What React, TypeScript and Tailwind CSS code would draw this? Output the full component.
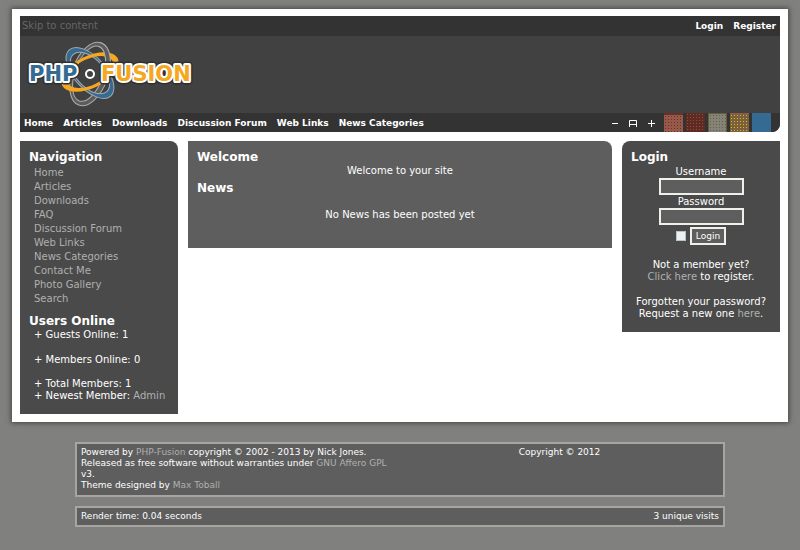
import type {ReactNode} from 'react'

const mainLinks = ['Home', 'Articles', 'Downloads', 'Discussion Forum', 'Web Links', 'News Categories']

const navigation = [
  'Home',
  'Articles',
  'Downloads',
  'FAQ',
  'Discussion Forum',
  'Web Links',
  'News Categories',
  'Contact Me',
  'Photo Gallery',
  'Search',
]

const swatches = [
  {
    name: 'Clay',
    style:
      'border-t-2 border-[#6a3026] bg-[#96594a] bg-[radial-gradient(#6a3026_30%,transparent_32%)] bg-[size:3px_3px]',
  },
  {
    name: 'Brick',
    style: 'bg-[#5e2a22] bg-[radial-gradient(#8c5144_30%,transparent_32%)] bg-[size:3px_3px]',
  },
  {
    name: 'Stone',
    style:
      'border border-b-0 border-[#625f31] bg-[#858379] bg-[radial-gradient(#65623a_30%,transparent_32%)] bg-[size:3px_3px]',
  },
  {
    name: 'Amber',
    style:
      'border-t border-[#96594a] bg-[#77613f] bg-[radial-gradient(#f9ad12_45%,transparent_47%)] bg-[size:3px_3px]',
  },
  {name: 'Blue', style: 'bg-[#356b92]'},
]

function GreyRing() {
  return (
    <path
      transform="translate(90 74) rotate(20)"
      fill="#5c5c5c"
      stroke="#adadad"
      strokeWidth="1"
      d="M-18 0A18 33 0 1 1 18 0A18 33 0 1 1 -18 0ZM-15 0A14 29 0 1 0 13 0A14 29 0 1 0 -15 0Z"
    />
  )
}

function Logo() {
  return (
    <svg width="170" height="70" viewBox="26 40 170 70" role="img" aria-label="PHP-Fusion">
      <clipPath id="ring-front">
        <rect x="99" y="40" width="14" height="34" />
      </clipPath>
      <g fillRule="evenodd">
        <GreyRing />
        <path
          transform="translate(90 73) rotate(-42)"
          fill="#356b92"
          stroke="#a3a9ac"
          strokeWidth="1"
          d="M-16 0A16 31 0 1 1 16 0A16 31 0 1 1 -16 0ZM-14 0A14 25 0 1 0 14 0A14 25 0 1 0 -14 0Z"
        />
        <path
          transform="translate(90 72) rotate(64)"
          fill="#f5a81f"
          d="M-16 0A16 31 0 1 1 16 0A16 31 0 1 1 -16 0ZM-13 0A13 25 0 1 0 13 0A13 25 0 1 0 -13 0Z"
        />
        <g clipPath="url(#ring-front)">
          <GreyRing />
        </g>
      </g>
      <g
        fontFamily="'DejaVu Sans', sans-serif"
        fontSize="21"
        fontWeight="700"
        strokeLinejoin="round"
        paintOrder="stroke"
      >
        <g fill="#303031" stroke="#303031" strokeWidth="7">
          <text x="29" y="81">PHP</text>
          <text x="101" y="81">FUSION</text>
        </g>
        <g stroke="#ffffff" strokeWidth="4">
          <text x="29" y="81" fill="#356b92">PHP</text>
          <text x="101" y="81" fill="#f5a81f">FUSION</text>
        </g>
      </g>
      <circle cx="90" cy="74" r="6" fill="#414142" />
      <circle cx="90" cy="74" r="4" fill="#414142" stroke="#ffffff" strokeWidth="2" />
    </svg>
  )
}

function Header() {
  return (
    <header className="overflow-hidden rounded-br-lg bg-[#414142] text-[9px] font-bold">
      <div className="flex h-5 items-center justify-between bg-[#333333] pr-1 pl-[2px]">
        <a href="#content" className="text-[10px] font-normal text-[#666666]">
          Skip to content
        </a>
        <div className="flex gap-[10px]">
          <a href="#login">Login</a>
          <a href="#register">Register</a>
        </div>
      </div>
      <div className="px-[6px] pt-1 pb-[3px]">
        <a href="#home" className="inline-block align-top">
          <Logo />
        </a>
      </div>
      <div className="flex h-[19px] items-center justify-between bg-[#333333] pr-[9px] pl-1">
        <nav className="flex gap-[10px]">
          {mainLinks.map((link) => (
            <a key={link} href="#content">
              {link}
            </a>
          ))}
        </nav>
        <div className="flex items-center">
          <div className="mr-2 flex items-center gap-[9px]">
            <button type="button" aria-label="Smaller text">
              <svg width="8" height="10" className="block">
                <path d="M1 5.5H7" stroke="#fff" />
              </svg>
            </button>
            <button type="button" aria-label="Default text">
              <svg width="10" height="10" className="block">
                <path d="M1.5 9V2.5H8.5V9M1.5 6.5H8.5" stroke="#fff" fill="none" />
              </svg>
            </button>
            <button type="button" aria-label="Larger text">
              <svg width="9" height="10" className="block">
                <path d="M1 5.5H8M4.5 2V9" stroke="#fff" />
              </svg>
            </button>
          </div>
          <div className="flex gap-[3px]">
            {swatches.map((swatch) => (
              <button
                key={swatch.name}
                type="button"
                aria-label={swatch.name}
                className={`h-[19px] w-[19px] ${swatch.style}`}
              />
            ))}
          </div>
        </div>
      </div>
    </header>
  )
}

function Title({children}: {children: ReactNode}) {
  return <h2 className="text-[12px] leading-4 font-bold">{children}</h2>
}

function MutedLink({children}: {children: ReactNode}) {
  return (
    <a href="#content" className="text-[#b0b0b0]">
      {children}
    </a>
  )
}

function Sidebar() {
  return (
    <aside className="w-[158px] shrink-0 rounded-tr-lg bg-[#4a4a4a] px-[9px] pt-2 pb-3">
      <Title>Navigation</Title>
      <ul className="mt-[1px] mb-[7px] pl-[5px] leading-[14px]">
        {navigation.map((item) => (
          <li key={item}>
            <MutedLink>{item}</MutedLink>
          </li>
        ))}
      </ul>
      <Title>Users Online</Title>
      <div className="pl-[5px] whitespace-nowrap">
        <p>+ Guests Online: 1</p>
        <p className="mt-[13px]">+ Members Online: 0</p>
        <p className="mt-3">+ Total Members: 1</p>
        <p>
          + Newest Member: <MutedLink>Admin</MutedLink>
        </p>
      </div>
    </aside>
  )
}

function LoginPanel() {
  const field = 'block h-[17px] w-[85px] border-2 border-[#f0f0ea] bg-[#5e5e5e] px-1 outline-none'

  return (
    <aside className="w-[158px] shrink-0 rounded-tl-lg bg-[#4a4a4a] px-[9px] pt-2 pb-3">
      <Title>Login</Title>
      <form className="flex flex-col items-center">
        <label htmlFor="username" className="mt-[1px]">
          Username
        </label>
        <input id="username" type="text" className={field} />
        <label htmlFor="password" className="mt-[1px]">
          Password
        </label>
        <input id="password" type="password" className={field} />
        <div className="mt-[2px] flex items-center gap-1">
          <input
            type="checkbox"
            aria-label="Remember me"
            className="h-[10px] w-[10px] appearance-none border border-[#b6c4cc] bg-[#eef1f0]"
          />
          <button type="button" className="h-[18px] border-2 border-[#f0f0ea] bg-[#5e5e5e] px-1 text-[9px]">
            Login
          </button>
        </div>
      </form>
      <div className="mt-[14px] text-center whitespace-nowrap">
        <p>Not a member yet?</p>
        <p>
          <MutedLink>Click here</MutedLink> to register.
        </p>
        <p className="mt-[13px]">Forgotten your password?</p>
        <p>
          Request a new one <MutedLink>here</MutedLink>.
        </p>
      </div>
    </aside>
  )
}

function Footer() {
  return (
    <footer className="mx-auto mt-5 w-13/16 text-[9px] leading-[11px]">
      <div className="flex border-2 border-[#a8a5a0] bg-[#5e5e5e] px-1 pt-[3px] pb-1">
        <div className="w-1/2">
          <p>
            Powered by <MutedLink>PHP-Fusion</MutedLink> copyright © 2002 - 2013 by Nick Jones.
          </p>
          <p>
            Released as free software without warranties under <MutedLink>GNU Affero GPL</MutedLink>
            <br />
            v3.
          </p>
          <p>
            Theme designed by <MutedLink>Max Toball</MutedLink>
          </p>
        </div>
        <div className="w-1/2 text-center">Copyright © 2012</div>
      </div>
      <div className="mt-[9px] flex justify-between border-2 border-[#a8a5a0] bg-[#5e5e5e] px-1 py-[3px]">
        <span>Render time: 0.04 seconds</span>
        <span>3 unique visits</span>
      </div>
    </footer>
  )
}

export default function App() {
  return (
    <div className="min-h-screen bg-[#80807e] pt-[9px] font-['DejaVu_Sans',sans-serif] text-[10px] leading-3 text-white">
      <div className="mx-3 bg-white px-2 pt-[7px] pb-2 shadow-[0_0_5px_1px_#444444]">
        <Header />
        <div className="mt-[9px] flex items-start gap-[10px]">
          <Sidebar />
          <main id="content" className="flex-1 rounded-tr-lg bg-[#5e5e5e] px-[9px] pt-2 pb-[27px]">
            <Title>Welcome</Title>
            <p className="mb-[3px] text-center">Welcome to your site</p>
            <Title>News</Title>
            <p className="mt-[13px] text-center">No News has been posted yet</p>
          </main>
          <LoginPanel />
        </div>
      </div>
      <Footer />
    </div>
  )
}
